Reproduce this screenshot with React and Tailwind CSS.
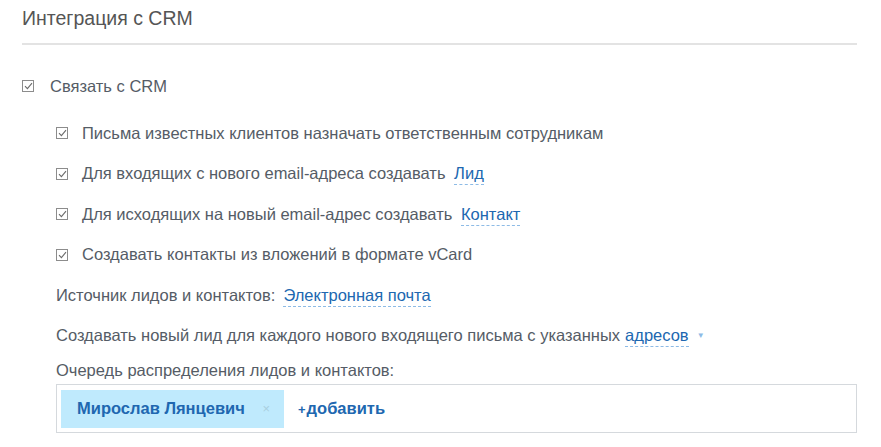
import React from 'react';

const font = { fontFamily: '"Liberation Sans", Arial, sans-serif' };

function Box() {
  return (
    <span className="inline-flex h-[12px] w-[12px] shrink-0 items-center justify-center border border-[#8c8c8c] bg-white">
      <svg width="9" height="8" viewBox="0 0 9 8" fill="none">
        <path d="M1 4.2 L3.4 6.6 L8 1.2" stroke="#6b6b6b" strokeWidth="1.1" />
      </svg>
    </span>
  );
}

function Link({ children }) {
  return (
    <span className="border-b border-dashed border-[#8dbbe6] pb-[2px] leading-[18px] text-[#2067b0]">
      {children}
    </span>
  );
}

function CheckRow({ children }) {
  return (
    <div className="flex h-[40.5px] items-center gap-[14px]">
      <Box />
      <span>{children}</span>
    </div>
  );
}

export default function App() {
  return (
    <div className="h-[447px] w-[881px] overflow-hidden bg-white text-[16.5px] text-[#555c66]" style={font}>
      <div className="px-[22px] pt-[6px]">
        <h1 className="text-[19.5px] leading-[24px] text-[#555]">Интеграция с CRM</h1>
        <div className="mt-[13px] mr-[2px] h-[2px] bg-[#e3e3e3]" />

        <div className="mt-[31px] flex h-[20px] items-center gap-[16px]">
          <Box />
          <span>Связать с CRM</span>
        </div>

        <div className="mt-[17px] pl-[34px]">
          <CheckRow>Письма известных клиентов назначать ответственным сотрудникам</CheckRow>
          <CheckRow>
            Для входящих с нового email-адреса создавать <span className="ml-[4px]"><Link>Лид</Link></span>
          </CheckRow>
          <CheckRow>
            Для исходящих на новый email-адрес создавать <span className="ml-[4px]"><Link>Контакт</Link></span>
          </CheckRow>
          <CheckRow>Создавать контакты из вложений в формате vCard</CheckRow>
          <div className="flex h-[40.5px] items-center">
            <span>Источник лидов и контактов:</span>
            <span className="ml-[8px]"><Link>Электронная почта</Link></span>
          </div>
          <div className="flex h-[40.5px] items-center">
            <span>Создавать новый лид для каждого нового входящего письма с указанных</span>
            <span className="ml-[5px]"><Link>адресов</Link></span>
            <span className="ml-[8px] text-[8px] text-[#8dbbe6]">▼</span>
          </div>
          <div className="flex h-[28px] items-center">
            <span>Очередь распределения лидов и контактов:</span>
          </div>
          <div className="mr-[2px] flex h-[49px] items-center border border-[#d5d9dd] px-[4px]">
            <div className="flex h-[38px] w-[223px] items-center bg-[#bfeafd] pl-[16px] pr-[14px]">
              <span className="font-bold text-[#2067b0]">Мирослав Лянцевич</span>
              <span className="ml-auto text-[13px] text-[#a9cfdf]">×</span>
            </div>
            <span className="ml-[14px] font-bold text-[#2067b0]">
              <span className="mr-[1px] text-[13px]">+</span>добавить
            </span>
          </div>
        </div>
      </div>
    </div>
  );
}
